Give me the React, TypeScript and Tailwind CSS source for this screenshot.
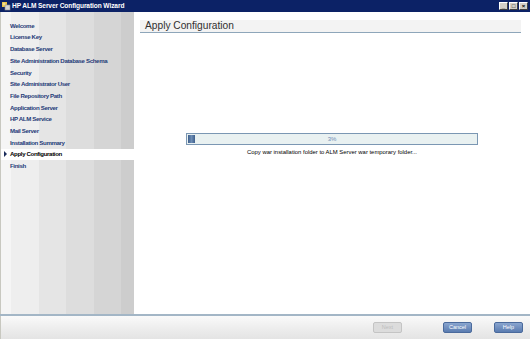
import React from "react";

const items = [
  "Welcome",
  "License Key",
  "Database Server",
  "Site Administration Database Schema",
  "Security",
  "Site Administrator User",
  "File Repository Path",
  "Application Server",
  "HP ALM Service",
  "Mail Server",
  "Installation Summary",
  "Apply Configuration",
  "Finish",
];

export default function App() {
  return (
    <div
      className="w-[530px] h-[339px] flex flex-col bg-white overflow-hidden"
      style={{ fontFamily: '"Liberation Sans", Arial, sans-serif' }}
    >
      {/* Title bar */}
      <div className="h-[12px] bg-[#0c2266] flex items-center pl-[1px] pr-[2px]">
        <svg width="10" height="10" viewBox="0 0 10 10" className="shrink-0">
          <rect x="1" y="1" width="5" height="5" fill="#e8c24a" />
          <rect x="4" y="4" width="5" height="5" fill="#d4d4d4" stroke="#8a8a8a" strokeWidth="0.6" />
          <circle cx="3" cy="3" r="1.5" fill="#f3dd8a" />
        </svg>
        <span className="text-white font-bold text-[6.6px] leading-none tracking-[-0.1px] ml-[1px]">
          HP ALM Server Configuration Wizard
        </span>
        <div className="ml-auto flex gap-[1px]">
          {["_", "□", "×"].map((c, i) => (
            <div
              key={i}
              className="w-[9px] h-[8px] bg-[#d4d0c8] border border-t-white border-l-white border-b-[#404040] border-r-[#404040] text-[6px] leading-[6px] text-black flex items-center justify-center font-bold"
            >
              {c}
            </div>
          ))}
        </div>
      </div>

      {/* Middle */}
      <div className="flex flex-1 min-h-0">
        {/* Sidebar */}
        <div className="relative w-[134px] border-l border-[#c8c8c0] flex">
          <div className="absolute inset-0 flex">
            <div className="w-[10px] bg-[#f5f5f5]" />
            <div className="w-[28px] bg-[#eeeeee]" />
            <div className="w-[27px] bg-[#e5e5e5]" />
            <div className="w-[28px] bg-[#dddddd]" />
            <div className="w-[27px] bg-[#d5d5d5]" />
            <div className="flex-1 bg-[#cdcdcd]" />
          </div>
          <div className="relative flex flex-col w-full pt-[8px]">
            {items.map((t) => {
              const active = t === "Apply Configuration";
              return (
                <div
                  key={t}
                  className={
                    "h-[11.7px] flex items-center text-[6.1px] font-bold whitespace-nowrap leading-none " +
                    (active ? "bg-white text-black" : "text-[#1f3b78]")
                  }
                >
                  <span className="w-[9px] flex justify-center">
                    {active && (
                      <svg width="3" height="6" viewBox="0 0 3 6">
                        <path d="M0 0 L3 3 L0 6 Z" fill="#1a2c5a" />
                      </svg>
                    )}
                  </span>
                  <span className="tracking-[-0.35px]">{t}</span>
                </div>
              );
            })}
          </div>
        </div>

        {/* Main */}
        <div className="flex-1 flex flex-col pl-[6px] pr-[9px] pt-[8px]">
          <div className="h-[13px] bg-[#f3f3f3] border-b border-[#8ea6ba] flex items-end pl-[5px]">
            <span className="text-[10.2px] leading-[12px] text-[#303030]">Apply Configuration</span>
          </div>
          <div className="flex flex-col items-center mt-[100px] pl-[3px]">
            <div className="relative w-[292px] h-[12px] border border-[#7b97b3] bg-[#e9f1f1] flex items-center">
              <div className="absolute left-[1px] top-[1px] bottom-[1px] w-[7px] bg-gradient-to-r from-[#3e5f8c] via-[#6d8db5] to-[#3e5f8c]" />
              <span className="w-full text-center text-[6px] text-[#6d8cb3]">3%</span>
            </div>
            <div className="mt-[3px] text-[5.9px] text-black whitespace-nowrap">
              Copy war installation folder to ALM Server war temporary folder...
            </div>
          </div>
        </div>
      </div>

      {/* Divider */}
      <div className="h-[2px] bg-[#a3b6c6]" />

      {/* Footer */}
      <div className="h-[23px] bg-gradient-to-b from-[#fafafa] via-[#eeeeee] to-[#e4e4e4] border-l border-[#c8c8c0] flex items-center justify-end pr-[7px]">
        <button className="w-[29px] h-[11px] rounded-[2px] bg-[#dcdcdc] border border-[#c4c4c4] text-[5.5px] text-[#bcbcbc]">
          Next
        </button>
        <button className="ml-[41px] w-[29px] h-[11px] rounded-[2px] bg-gradient-to-b from-[#8aa5cf] to-[#5a7cb0] border border-[#4a6a9c] text-[5.5px] text-white">
          Cancel
        </button>
        <button className="ml-[22px] w-[29px] h-[11px] rounded-[2px] bg-gradient-to-b from-[#8aa5cf] to-[#5a7cb0] border border-[#4a6a9c] text-[5.5px] text-white">
          Help
        </button>
      </div>
    </div>
  );
}
